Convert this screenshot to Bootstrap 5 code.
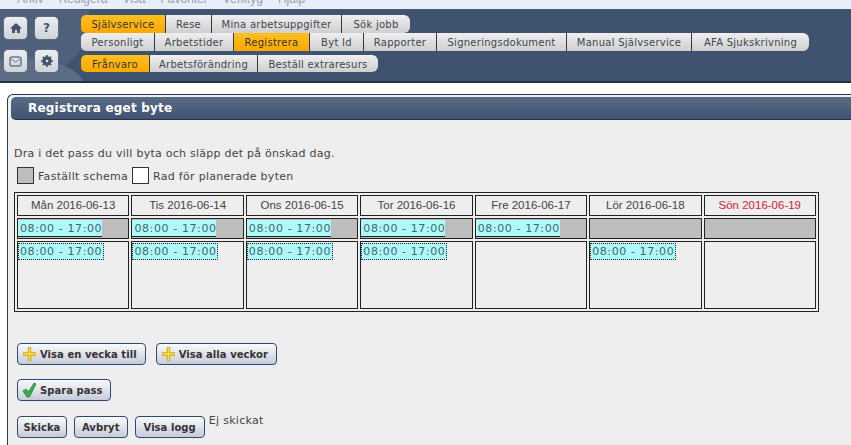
<!DOCTYPE html>
<html lang="sv"><head><meta charset="utf-8"><title>Registrera eget byte</title>
<link href="https://cdn.jsdelivr.net/npm/bootstrap@5.3.0/dist/css/bootstrap.min.css" rel="stylesheet">
<style>
html,body{height:445px;overflow:hidden;background:#fff}
body{font-family:"DejaVu Sans",sans-serif;font-size:11px;color:#444}
.menubar{height:9px;background:#e8eefa;overflow:hidden;color:#9aa0a8;font-family:"Liberation Sans",sans-serif;font-size:12px;line-height:1;padding-left:17px;gap:15px}
.menubar span{margin-top:-7px}
.hdr{height:74px;background:#3f5370;border-top:1px solid #4a5a70;border-bottom:2px solid #232f42;position:relative;overflow:hidden}
.hdr::before{content:"";position:absolute;left:-25px;top:-45px;width:115px;height:110px;border-radius:50%;background:#4e607a}
.hdr::after{content:"";position:absolute;left:-40px;top:48px;width:125px;height:60px;border-radius:50%;background:#5b6c84}
.iconcol{position:relative;z-index:1;width:81px;padding:6px 0 0 3px;row-gap:9px;column-gap:6px;display:grid;grid-template-columns:25px 25px;grid-auto-rows:24px}
.ibtn{border-radius:5px;background:linear-gradient(#eceef0,#cfd3d8);border:1px solid #5d6d84;color:#44536b;font-weight:bold;font-size:12px}
.tabsrow{height:18px}
.tabwrap{padding-top:5px;position:relative;z-index:1}
.tabsrow.third{margin-top:4px;height:17px}
.tb{height:100%;line-height:19px;font-size:10px;letter-spacing:.27px;color:#3d4650;background:linear-gradient(#efefef,#cfcfcf);border-right:1px solid #2d3b4f;text-align:center;white-space:nowrap}
.tb:first-child{border-radius:5px 0 0 5px}
.tb:last-child{border-radius:0 6px 6px 0;border-right:0}
.tb.on{background:linear-gradient(#ffc020,#fda800);color:#3b3320}
.w46{width:46px}.w54{width:54px}.w68{width:68px}.w69{width:69px}.w73{width:73px}.w74{width:74px}.w76{width:76px}.w79{width:79px}.w85{width:85px}.w108{width:108px}.w117{width:117px}.w120{width:120px}.w125{width:125px}.w130{width:130px}
.panel{margin:11px 0 0 7px;border:1px solid #2c3a52;border-right:0;border-bottom:0;border-radius:6px 0 0 0;background:#eee;padding:2px 0 0 3px;height:351px}
.ptitle{height:23px;background:linear-gradient(#5a6c85,#3f5370);border-radius:5px 0 0 5px;border-bottom:1px solid #263246;color:#fff;font-weight:bold;font-size:12px;letter-spacing:.2px;line-height:23px;padding-left:17px}
.intro{margin:27px 0 0 3px;line-height:14px;letter-spacing:.25px}
.legend{margin:6px 0 0 6px;height:19px;line-height:19px;letter-spacing:.29px}
.swatch{width:17px;height:17px;border:1px solid #333;background:#bdbdbd;margin:0 4px 0 0}
.swatch.blank{background:#fff;margin:0 4px 0 4px}
.week{margin:6px 0 0 3px;width:805px;border:1px solid #222;padding:2px;display:grid;grid-template-columns:repeat(7,1fr);grid-template-rows:21px 21px 68px;gap:2px;height:120px}
.head,.day,.slot{border:1px solid #222;min-width:0}
.head{font-family:"Liberation Sans",sans-serif;font-size:11.500px;text-align:center;line-height:19px;color:#444}
.head.red{color:#e3182d}
.day{background:#bdbdbd;padding:1px 0}
.shift{display:block;width:84px;height:17px;background:#aefafa;color:#45666a;font-size:11px;letter-spacing:.6px;line-height:18px;border-bottom:1px solid #222;padding-left:2px;white-space:nowrap}
.slot{padding:1px 0}
.plan{display:block;width:86px;height:17px;background:#aefafa;color:#45666a;font-size:11px;letter-spacing:.6px;line-height:16px;border:1px dotted #222;padding-left:1px;white-space:nowrap}
.actions{margin:31px 0 0 6px;gap:10px}
.acts2{margin:14px 0 0 6px}
.acts3{margin:15px 0 0 6px;gap:7px}
.ab{height:22px;padding:0 7px;border:1px solid #2f4a70;border-radius:4px;background:linear-gradient(#fafafa,#c5cbdb);color:#333;font-weight:bold;font-size:10px;letter-spacing:.05px;white-space:nowrap}
.ab.ic{padding:0 8px 0 4px;gap:3px}
.ab.ic.sv{padding-right:7px}
.ab.tight{padding:0 5.500px}
.ab.wide{padding:0 8px}
.ab svg{flex:none}
.status{margin-left:-3px;margin-top:-3px;line-height:15px;letter-spacing:.3px}
</style></head><body>
<div class="menubar d-flex"><span>Arkiv</span><span>Redigera</span><span>Visa</span><span>Favoriter</span><span>Verktyg</span><span>Hjälp</span></div>
<div class="hdr d-flex">
 <div class="iconcol">
  <div class="ibtn d-flex align-items-center justify-content-center"><svg width="12" height="12" viewBox="0 0 12 12"><path d="M6 1 0 6.500h2V11h3V8h2v3h3V6.500h2z" fill="#44536b"/></svg></div>
  <div class="ibtn d-flex align-items-center justify-content-center">?</div>
  <div class="ibtn d-flex align-items-center justify-content-center"><svg width="13" height="11" viewBox="0 0 13 11"><rect x="1" y="1" width="11" height="9" rx="2" fill="none" stroke="#6b7a90" stroke-width="1.500"/><path d="M2 3l4.500 3L11 3" fill="none" stroke="#6b7a90"/></svg></div>
  <div class="ibtn d-flex align-items-center justify-content-center"><svg width="12" height="12" viewBox="0 0 12 12"><circle cx="6" cy="6" r="3.500" fill="none" stroke="#44536b" stroke-width="2.500"/><path d="M6 0v12M0 6h12M1.800 1.800l8.400 8.400M10.200 1.800l-8.400 8.400" stroke="#44536b" stroke-width="1.500"/><circle cx="6" cy="6" r="1.300" fill="#ddd"/></svg></div>
 </div>
 <div class="tabwrap">
  <div class="tabsrow d-flex"><div class="tb on w85">Självservice</div><div class="tb w46">Rese</div><div class="tb w130">Mina arbetsuppgifter</div><div class="tb w68">Sök jobb</div></div>
  <div class="tabsrow d-flex"><div class="tb w74">Personligt</div><div class="tb w79">Arbetstider</div><div class="tb on w76">Registrera</div><div class="tb w54">Byt Id</div><div class="tb w73">Rapporter</div><div class="tb w130">Signeringsdokument</div><div class="tb w125">Manual Självservice</div><div class="tb w117">AFA Sjukskrivning</div></div>
  <div class="tabsrow third d-flex"><div class="tb on w69">Frånvaro</div><div class="tb w108">Arbetsförändring</div><div class="tb w120">Beställ extraresurs</div></div>
 </div>
</div>
<div class="panel">
 <div class="ptitle">Registrera eget byte</div>
 <div class="intro">Dra i det pass du vill byta och släpp det på önskad dag.</div>
 <div class="legend d-flex"><span class="swatch"></span><span>Faställt schema</span><span class="swatch blank"></span><span>Rad för planerade byten</span></div>
 <div class="week">
  <div class="head">Mån 2016-06-13</div><div class="head">Tis 2016-06-14</div><div class="head">Ons 2016-06-15</div><div class="head">Tor 2016-06-16</div><div class="head">Fre 2016-06-17</div><div class="head">Lör 2016-06-18</div><div class="head red">Sön 2016-06-19</div>
  <div class="day"><span class="shift">08:00 - 17:00</span></div><div class="day"><span class="shift">08:00 - 17:00</span></div><div class="day"><span class="shift">08:00 - 17:00</span></div><div class="day"><span class="shift">08:00 - 17:00</span></div><div class="day"><span class="shift">08:00 - 17:00</span></div><div class="day"></div><div class="day"></div>
  <div class="slot"><span class="plan">08:00 - 17:00</span></div><div class="slot"><span class="plan">08:00 - 17:00</span></div><div class="slot"><span class="plan">08:00 - 17:00</span></div><div class="slot"><span class="plan">08:00 - 17:00</span></div><div class="slot"></div><div class="slot"><span class="plan">08:00 - 17:00</span></div><div class="slot"></div>
 </div>
 <div class="actions d-flex">
  <div class="ab ic d-flex align-items-center"><svg width="15" height="16" viewBox="0 0 15 16"><path d="M7.500 1v14M1 8h13" stroke="#d4a617" stroke-width="3.500"/><path d="M7.500 1.500v13M1.500 8h12" stroke="#fde047" stroke-width="1.500"/></svg>Visa en vecka till</div>
  <div class="ab ic d-flex align-items-center"><svg width="15" height="16" viewBox="0 0 15 16"><path d="M7.500 1v14M1 8h13" stroke="#d4a617" stroke-width="3.500"/><path d="M7.500 1.500v13M1.500 8h12" stroke="#fde047" stroke-width="1.500"/></svg>Visa alla veckor</div>
 </div>
 <div class="acts2 d-flex"><div class="ab ic sv d-flex align-items-center"><svg width="15" height="16" viewBox="0 0 15 16"><path d="M1 9l3-2 2.500 3L12 1l2 1-6.500 13H5z" fill="#35b04a" stroke="#1f7a30" stroke-width=".7"/></svg>Spara pass</div></div>
 <div class="acts3 d-flex align-items-start"><div class="ab tight d-flex align-items-center">Skicka</div><div class="ab d-flex align-items-center">Avbryt</div><div class="ab wide d-flex align-items-center">Visa logg</div><div class="status">Ej skickat</div></div>
</div>
</body></html>
